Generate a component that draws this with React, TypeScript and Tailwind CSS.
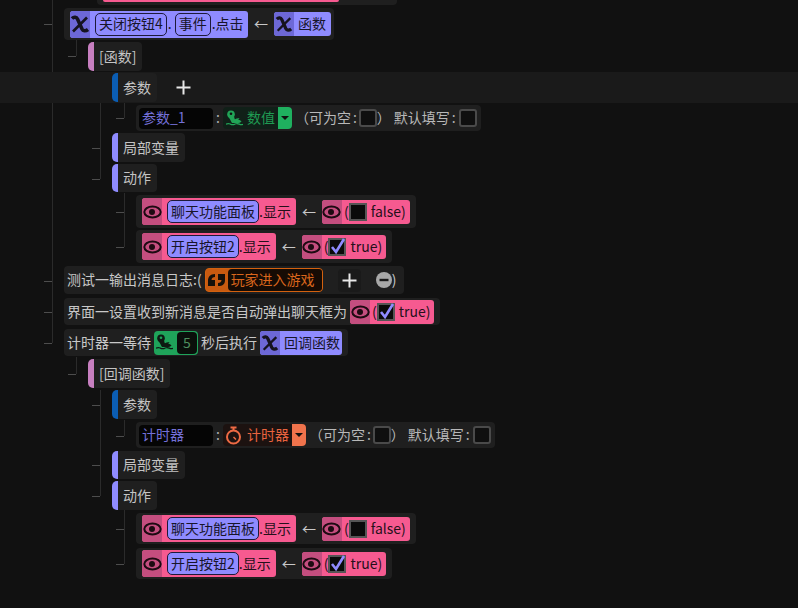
import React from "react";

const FONT = "[font-family:'Noto_Sans_CJK_SC','Noto_Sans',sans-serif]";
const UP = "pb-[2px]";

function Fx({ size = 20, color = "#15131f" }: { size?: number; color?: string }) {
  return (
    <svg width={size} height={size} viewBox="0 0 20 20" fill="none">
      <path d="M2 4.500C4 2.500 6.500 3 7.500 5L12 15c1 2 3.500 2.500 6 .5" stroke={color} strokeWidth="3.600" />
      <path d="M17 3.500L3 17.500" stroke={color} strokeWidth="2.600" />
    </svg>
  );
}

function Eye() {
  return (
    <svg width="19" height="14" viewBox="0 0 19 14" fill="none">
      <ellipse cx="9.500" cy="7" rx="8.200" ry="5.400" stroke="#1d0a12" strokeWidth="2" />
      <circle cx="9" cy="7" r="3" fill="#1d0a12" />
    </svg>
  );
}

function Frog({ color = "#21a557", eye = "#111" }: { color?: string; eye?: string }) {
  return (
    <svg width="19" height="17" viewBox="0 0 19 17" fill={color}>
      <circle cx="6" cy="4.200" r="3.800" />
      <path d="M3 6.500h6c.5 1.500.5 2.500 1 2.800 1.500-1 3.500-1.300 4.500-.8-.5.5-1.200 1-1.200 1.500 1.200-.2 2.700.5 3.200 1.500-1 1-2.500 1.500-4 1.500H7C6 11.500 5 8.500 3 6.500z" />
      <path d="M1 13.500c1.500-.8 3-.8 4.500 0s3 .8 4.500 0 3-.8 4.500 0 2.500.6 3.500.2v1.300c-1.200.5-2.500.5-4-.2s-2.800-.8-4-.1-3.300.8-4.800 0-2.800-.6-4.200.1z" />
      <circle cx="6" cy="3.800" r="1.300" fill={eye} />
    </svg>
  );
}

function Timer({ color = "#ee6a44" }: { color?: string }) {
  return (
    <svg width="17" height="19" viewBox="0 0 17 19" fill="none" stroke={color} strokeWidth="2">
      <circle cx="8.500" cy="11" r="6.500" />
      <path d="M5.500 1.500h6M8.500 1.500v3" />
      <path d="M8.500 11l2.500 2.500" strokeWidth="1.500" />
    </svg>
  );
}

function Quote() {
  return (
    <svg width="19" height="14" viewBox="0 0 19 14" fill="#15100a">
      <path d="M8 1C3 1 1 4 1 8v5h7V7H4.500C4.500 5 6 4 8 4zM11 1h7v6c0 4-2 6-7 6v-3c2 0 3.500-1 3.500-3H11z" />
    </svg>
  );
}

function Plus() {
  return (
    <svg width="15" height="15" viewBox="0 0 15 15" fill="none">
      <path d="M7.500 0.500V14.500M0.500 7.500H14.500" stroke="#e8e8e8" strokeWidth="2" />
    </svg>
  );
}

function Check({ on }: { on: boolean }) {
  return (
    <span className="relative inline-block h-[18px] w-[18px] border-[2px] border-[#555] bg-[#0b0b0b]">
      {on && (
        <svg className="absolute -left-[1px] -top-[3px]" width="18" height="19" viewBox="0 0 18 19" fill="none">
          <path d="M3 10l4 5 8-13" stroke="#8f8bff" strokeWidth="2.600" />
        </svg>
      )}
    </span>
  );
}

function EmptyBox() {
  return <span className="inline-block h-[18px] w-[18px] rounded-[3px] border-[2px] border-[#4a4a4a] bg-[#0f0f0f]" />;
}

function Func({ label, w }: { label: string; w: string }) {
  return (
    <span className={`flex h-[24px] items-center overflow-hidden rounded-[3px] bg-[#8f8bff] text-[#17152a] ${w}`}>
      <span className="flex h-full w-[20px] items-center justify-center bg-[#6d68d6]">
        <Fx size={18} />
      </span>
      <span className={`ml-[4px] ${UP}`}>{label}</span>
    </span>
  );
}

function Pill({ label }: { label: string }) {
  return (
    <span className="flex h-[23px] items-center rounded-[5px] border border-[#1d1a3a] bg-[#8f8bff] px-[3px] pb-[2px] text-[#17152a]">
      {label}
    </span>
  );
}

function BoolValue({ on, label }: { on: boolean; label: string }) {
  return (
    <span className="flex h-[24px] items-center overflow-hidden rounded-[3px] bg-[#f65a90] pr-[4px] text-[#25101a]">
      <span className="flex h-full w-[20px] items-center justify-center bg-[#c44e7f]">
        <Eye />
      </span>
      <span className={`ml-[2px] ${UP}`}>(</span>
      <Check on={on} />
      <span className={`ml-[4px] ${UP}`}>{label})</span>
    </span>
  );
}

function Assign({ name, on, label, className }: { name: string; on: boolean; label: string; className: string }) {
  return (
    <div className={`ml-[136px] flex w-fit items-center rounded-[4px] bg-[#1f1f1f] pl-[6px] pr-[6px] ${className}`}>
      <span className="flex h-[27px] items-center overflow-hidden rounded-[3px] bg-[#f65a90] pr-[5px] text-[#25101a]">
        <span className="flex h-full w-[20px] items-center justify-center bg-[#c44e7f]">
          <Eye />
        </span>
        <span className="ml-[5px]">
          <Pill label={name} />
        </span>
        <span className={UP}>.显示</span>
      </span>
      <span className={`mx-[5px] w-[16px] text-center text-[#c8c8c8] ${UP}`}>←</span>
      <BoolValue on={on} label={label} />
    </div>
  );
}

function Section({ label, accent, ml, className }: { label: string; accent: string; ml: string; className: string }) {
  return (
    <div className={`flex w-fit ${ml} ${className}`}>
      <span className={`w-[6px] rounded-l-[5px] ${accent}`} />
      <span className="flex items-center rounded-r-[4px] bg-[#1f1f1f] pb-[2px] pl-[5px] pr-[6px] text-[#c4c4c4]">{label}</span>
    </div>
  );
}

function Param({ name, type, kind, accent, text, bg, className }: { name: string; type: string; kind: "frog" | "timer"; accent: string; text: string; bg: string; className: string }) {
  return (
    <div className={`ml-[136px] flex w-fit items-center rounded-[4px] bg-[#1f1f1f] pl-[3px] pr-[4px] ${className}`}>
      <span className="flex h-[21px] w-[74px] items-center rounded-[4px] bg-[#050505] pb-[2px] pl-[3px] text-[#7470d8]">{name}</span>
      <span className={`mx-[3px] text-[#b0b0b0] ${UP}`}>:</span>
      <span className={`flex h-[22px] items-center rounded-[4px] pl-[2px] ${bg} ${text}`}>
        {kind === "frog" ? <Frog /> : <Timer />}
        <span className={kind === "frog" ? "ml-[3px] mr-[3px] pb-[2px]" : "ml-[5px] mr-[3px] pb-[2px]"}>{type}</span>
        <span className={`flex h-[22px] w-[14px] items-center justify-center rounded-r-[4px] ${accent}`}>
          <span className="h-0 w-0 border-x-[4px] border-t-[4px] border-x-transparent border-t-[#111]" />
        </span>
      </span>
      <span className={`ml-[3px] text-[#b8b8b8] ${UP}`}>（可为空</span>
      <span className={`ml-[2px] text-[#b0b0b0] ${UP}`}>:</span>
      <span className="ml-[2px] flex">
        <EmptyBox />
      </span>
      <span className={`text-[#b8b8b8] ${UP}`}>）</span>
      <span className={`ml-[3px] text-[#b8b8b8] ${UP}`}>默认填写</span>
      <span className={`mx-[2px] text-[#b0b0b0] ${UP}`}>:</span>
      <span className="ml-[1px] flex">
        <EmptyBox />
      </span>
    </div>
  );
}

function Connectors() {
  const dim = "M52.500 0V343M76.500 40V56M100.500 103V179M124.500 103V118M124.500 193V247M76.500 357V374M100.500 390V496M124.500 420V436M124.500 510V564";
  const tick = "M44 24.500H52M68 56.500H76M92 87.500H100M116 118.500H124M92 148.500H100M92 179.500H100M116 212.500H124M116 247.500H124M44 281.500H52M44 312.500H52M44 343.500H52M68 374.500H76M92 405.500H100M116 436.500H124M92 465.500H100M92 496.500H100M116 529.500H124M116 564.500H124";
  return (
    <svg className="pointer-events-none absolute left-0 top-0" width="798" height="608" fill="none">
      <path d={dim} stroke="#2b2b2b" />
      <path d={tick} stroke="#4d4d4d" />
    </svg>
  );
}

export default function App() {
  return (
    <div className={`relative h-[608px] w-[798px] overflow-hidden bg-[#111111] text-[14px] leading-[20px] text-[#c8c8c8] ${FONT}`}>
      <Connectors />
      <div className="relative flex flex-col">
        {/* cut-off row above */}
        <div className="ml-[97px] h-[5px] w-[300px] rounded-b-[4px] bg-[#1f1f1f] px-[6px]">
          <div className="h-[2px] w-[236px] rounded-b-[3px] bg-[#f65a90]" />
        </div>

        <div className="ml-[64px] mt-[3px] flex h-[32px] w-[270px] items-center rounded-[4px] bg-[#1f1f1f] pl-[6px]">
          <span className="flex h-[27px] w-[178px] items-center overflow-hidden rounded-[3px] bg-[#8f8bff] text-[#17152a]">
            <span className="flex h-full w-[20px] items-center justify-center bg-[#6d68d6]">
              <Fx />
            </span>
            <span className="ml-[5px]">
              <Pill label="关闭按钮4" />
            </span>
            <span className={`ml-[1px] ${UP}`}>.</span>
            <span className="ml-[3px]">
              <Pill label="事件" />
            </span>
            <span className={`ml-[1px] ${UP}`}>.点击</span>
          </span>
          <span className={`mx-[4px] w-[18px] text-center text-[#c8c8c8] ${UP}`}>←</span>
          <Func label="函数" w="w-[57px]" />
        </div>

        <Section label="[函数]" accent="bg-[#c77fc0]" ml="ml-[88px]" className="mt-[2px] h-[29px]" />

        <div className="mt-[1px] flex h-[31px] w-full items-center bg-[#1a1a1a] pl-[112px]">
          <Section label="参数" accent="bg-[#0b5db3]" ml="" className="h-[29px]" />
          <span className="ml-[19px] flex">
            <Plus />
          </span>
        </div>

        <Param name="参数_1" type="数值" kind="frog" accent="bg-[#1fb05f]" text="text-[#1f9a52]" bg="bg-[#102018]" className="mt-[2px] h-[26px]" />

        <Section label="局部变量" accent="bg-[#8f8bff]" ml="ml-[112px]" className="mt-[2px] h-[29px]" />
        <Section label="动作" accent="bg-[#8f8bff]" ml="ml-[112px]" className="mt-[2px] h-[28px]" />

        <Assign name="聊天功能面板" on={false} label="false" className="mt-[3px] h-[33px]" />
        <Assign name="开启按钮2" on={true} label="true" className="mt-[2px] h-[33px]" />

        <div className="ml-[64px] mt-[3px] flex h-[28px] w-[340px] items-center rounded-[4px] bg-[#1f1f1f] pl-[3px]">
          <span className={UP}>测试一输出消息日志:(</span>
          <span className="ml-[3px] flex h-[24px] items-center overflow-hidden rounded-[4px] border border-[#d3610f] bg-[#c85a10]">
            <span className="flex h-full w-[22px] items-center justify-center">
              <Quote />
            </span>
            <span className="flex h-full items-center rounded-l-[4px] bg-[#160b04] pb-[2px] pl-[3px] pr-[7px] text-[#d9661c]">玩家进入游戏</span>
          </span>
          <span className="ml-[15px] flex rounded-[4px] bg-[#1a1a1a] p-[4px]">
            <Plus />
          </span>
          <span className="ml-[15px] flex">
            <svg width="16" height="16" viewBox="0 0 16 16">
              <circle cx="8" cy="8" r="8" fill="#a8a8a8" />
              <path d="M3.500 8H12.500" stroke="#1a1a1a" strokeWidth="2.400" />
            </svg>
          </span>
          <span className={UP}>)</span>
        </div>

        <div className="ml-[64px] mt-[4px] flex h-[27px] w-[376px] items-center rounded-[4px] bg-[#1f1f1f] pl-[3px]">
          <span className={UP}>界面一设置收到新消息是否自动弹出聊天框为</span>
          <span className="ml-[3px]">
            <BoolValue on={true} label="true" />
          </span>
        </div>

        <div className="ml-[64px] mt-[4px] flex h-[27px] w-[284px] items-center rounded-[4px] bg-[#1f1f1f] pl-[3px]">
          <span className={UP}>计时器一等待</span>
          <span className="ml-[3px] flex h-[24px] items-center rounded-[4px] bg-[#1fa35a] pl-[1px] pr-[1px]">
            <Frog color="#0d1a12" eye="#1fa35a" />
            <span className="ml-[3px] flex h-[22px] w-[20px] items-center justify-center rounded-[4px] bg-[#0a0f0b] pb-[2px] text-[#4f8f5f]">5</span>
          </span>
          <span className={`ml-[3px] ${UP}`}>秒后执行</span>
          <span className="ml-[3px]">
            <Func label="回调函数" w="w-[82px]" />
          </span>
        </div>

        <Section label="[回调函数]" accent="bg-[#c77fc0]" ml="ml-[88px]" className="mt-[3px] h-[29px]" />
        <Section label="参数" accent="bg-[#0b5db3]" ml="ml-[112px]" className="mt-[2px] h-[29px]" />

        <Param name="计时器" type="计时器" kind="timer" accent="bg-[#f0734c]" text="text-[#e8633f]" bg="bg-[#1c1210]" className="mt-[3px] h-[26px]" />

        <Section label="局部变量" accent="bg-[#8f8bff]" ml="ml-[112px]" className="mt-[3px] h-[28px]" />
        <Section label="动作" accent="bg-[#8f8bff]" ml="ml-[112px]" className="mt-[2px] h-[29px]" />

        <Assign name="聊天功能面板" on={false} label="false" className="mt-[3px] h-[31px]" />
        <Assign name="开启按钮2" on={true} label="true" className="mt-[4px] h-[31px]" />
      </div>
    </div>
  );
}
